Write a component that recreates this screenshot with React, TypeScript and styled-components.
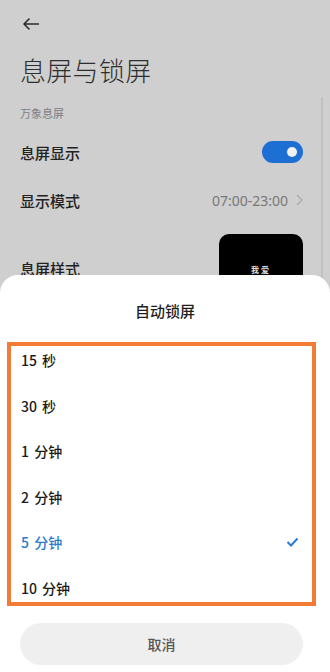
import React from "react";
import styled, { createGlobalStyle } from "styled-components";

const Global = createGlobalStyle`
  html, body { margin: 0; padding: 0; }
  body { font-family: "Noto Sans CJK SC", "Noto Sans", sans-serif; background: #cfcfcf; }
  * { box-sizing: border-box; }
`;

const Screen = styled.div`
  position: relative;
  width: 330px;
  height: 672px;
  overflow: hidden;
  background: #cfcfcf;
`;

const Page = styled.div`
  display: flex;
  flex-direction: column;
  padding: 0 27px 0 20px;
`;

const BackBar = styled.div`
  height: 48px;
  display: flex;
  align-items: center;
  padding-left: 2px;
`;

const Title = styled.h1`
  margin: 5px 0 0;
  font-size: 26px;
  line-height: 34px;
  font-weight: 300;
  color: #2e2e2e;
  letter-spacing: 0.3px;
`;

const SectionLabel = styled.div`
  margin-top: 18px;
  font-size: 11px;
  line-height: 16px;
  color: #7d7d84;
`;

const Row = styled.div<{ $h?: number; $mt?: number }>`
  display: flex;
  align-items: center;
  justify-content: space-between;
  min-height: ${(p) => p.$h ?? 48}px;
  margin-top: ${(p) => p.$mt ?? 0}px;
`;

const RowLabel = styled.span`
  font-size: 15px;
  font-weight: 500;
  color: #222;
`;

const RowValue = styled.span`
  display: flex;
  align-items: center;
  gap: 8px;
  font-family: "Noto Sans", "Noto Sans CJK SC", sans-serif;
  font-size: 14px;
  color: #777;
`;

const Toggle = styled.div`
  width: 41px;
  height: 22px;
  border-radius: 11px;
  background: #1d6fd3;
  display: flex;
  align-items: center;
  justify-content: flex-end;
  padding-right: 6px;
`;

const Knob = styled.div`
  width: 10px;
  height: 10px;
  border-radius: 50%;
  background: #f2f2f2;
`;

const Thumb = styled.div`
  width: 84px;
  height: 68px;
  border-radius: 10px;
  background: #000;
  display: flex;
  align-items: flex-start;
  justify-content: center;
  padding-top: 31px;
  color: #ddd;
  font-size: 8px;
  line-height: 10px;
  font-weight: 700;
  letter-spacing: 2px;
`;

const ScrollLine = styled.div`
  position: absolute;
  left: 321px;
  top: 97px;
  width: 2px;
  bottom: 0;
  background: #c1c1c1;
`;

const Sheet = styled.div`
  position: absolute;
  top: 275px;
  left: 0;
  right: 0;
  bottom: 0;
  background: #fff;
  border-radius: 18px 18px 0 0;
  display: flex;
  flex-direction: column;
`;

const SheetTitle = styled.div`
  margin-top: 26px;
  text-align: center;
  font-size: 15px;
  line-height: 20px;
  font-weight: 500;
  color: #1f1f1f;
`;

const Highlight = styled.div`
  margin: 21px 0 0 7px;
  width: 309px;
  height: 264px;
  border: 4px solid #f27b35;
  padding: 4px 13px 4px 10px;
  display: flex;
  flex-direction: column;
  gap: 25.6px;
`;

const Option = styled.div<{ $active?: boolean }>`
  height: 20px;
  display: flex;
  align-items: center;
  justify-content: space-between;
  font-size: 14px;
  line-height: 20px;
  font-weight: 500;
  word-spacing: 2px;
  color: ${(p) => (p.$active ? "#2a7ccc" : "#1a1a1a")};
`;

const CancelButton = styled.div`
  margin: 17px 27px 0 20px;
  height: 42px;
  border-radius: 21px;
  background: #efefef;
  display: flex;
  align-items: center;
  justify-content: center;
  font-size: 14px;
  font-weight: 500;
  color: #555;
`;

const options = ["15 秒", "30 秒", "1 分钟", "2 分钟", "5 分钟", "10 分钟"];

export default function App() {
  return (
    <Screen>
      <Global />
      <Page>
        <BackBar>
          <svg width="18" height="14" viewBox="0 0 18 14">
            <path d="M17 7H2M7.5 1.5L2 7l5.5 5.5" fill="none" stroke="#2a2a2a" strokeWidth="1.5" />
          </svg>
        </BackBar>
        <Title>息屏与锁屏</Title>
        <SectionLabel>万象息屏</SectionLabel>
        <Row $mt={7}>
          <RowLabel>息屏显示</RowLabel>
          <Toggle>
            <Knob />
          </Toggle>
        </Row>
        <Row>
          <RowLabel>显示模式</RowLabel>
          <RowValue>
            07:00-23:00
            <svg width="7" height="12" viewBox="0 0 7 12">
              <path d="M1 1l5 5-5 5" fill="none" stroke="#a8a8a8" strokeWidth="1.2" />
            </svg>
          </RowValue>
        </Row>
        <Row $mt={10} $h={68}>
          <RowLabel>息屏样式</RowLabel>
          <Thumb>我爱</Thumb>
        </Row>
      </Page>
      <ScrollLine />
      <Sheet>
        <SheetTitle>自动锁屏</SheetTitle>
        <Highlight>
          {options.map((o) => (
            <Option key={o} $active={o === "5 分钟"}>
              <span>{o}</span>
              {o === "5 分钟" && (
                <svg width="13" height="10" viewBox="0 0 13 10">
                  <path d="M1.5 5l3.5 3.5L11.5 1.5" fill="none" stroke="#2a7ccc" strokeWidth="2" />
                </svg>
              )}
            </Option>
          ))}
        </Highlight>
        <CancelButton>取消</CancelButton>
      </Sheet>
    </Screen>
  );
}
